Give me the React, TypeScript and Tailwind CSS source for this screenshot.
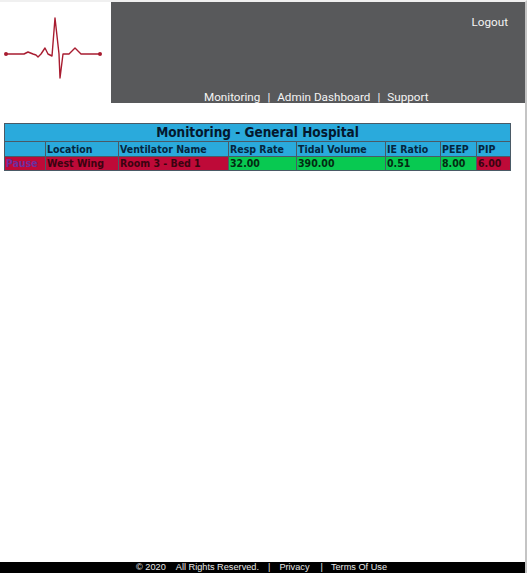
import React from 'react';

const columns = [
  { label: '', width: 'w-[41px]' },
  { label: 'Location', width: 'w-[73px]' },
  { label: 'Ventilator Name', width: 'w-[110px]' },
  { label: 'Resp Rate', width: 'w-[68px]' },
  { label: 'Tidal Volume', width: 'w-[89px]' },
  { label: 'IE Ratio', width: 'w-[55px]' },
  { label: 'PEEP', width: 'w-[36px]' },
  { label: 'PIP', width: 'w-[34px]' },
];

const cells = [
  { value: 'West Wing', alarm: true },
  { value: 'Room 3 - Bed 1', alarm: true },
  { value: '32.00', alarm: false },
  { value: '390.00', alarm: false },
  { value: '0.51', alarm: false },
  { value: '8.00', alarm: false },
  { value: '6.00', alarm: true },
];

const cellBase = 'border border-[#4a5a66] px-[1px] py-0 leading-[13px] text-left overflow-hidden whitespace-nowrap';

const App = () => {
  return (
    <div className="h-[573px] w-[527px] flex flex-col bg-white overflow-hidden border-r-2 border-r-[#c4c4c4] border-t-2 border-t-[#f0f0f0]">
      {/* Header */}
      <div className="flex h-[101px] shrink-0">
        <div className="w-[111px] shrink-0 pt-[14px]">
          <svg width="108" height="68" viewBox="0 0 108 68" fill="none" className="block">
            <path
              d="M6 38 H24 L28 36 L33 38 L36 39 L38 41 L41 38 L45 32 L48 38 L52 40 L55 2 L59 38 L60 62 L63 38 H69 L75 32 L81 38 H100"
              stroke="#a81c30"
              strokeWidth="1.4"
              strokeLinejoin="round"
            />
            <circle cx="6" cy="38" r="2" fill="#a81c30" />
            <circle cx="100" cy="38" r="2" fill="#a81c30" />
          </svg>
        </div>
        <div className="flex-1 flex flex-col justify-between bg-[#58595b] text-[#f4f4f4] font-['Roboto',sans-serif] text-[11.7px]">
          <div className="flex justify-end pt-[12px] pr-[17px]">
            <a className="leading-[16px]">Logout</a>
          </div>
          <nav className="flex gap-[7px] leading-[14px] h-[14px] pl-[93px] pt-[1px] whitespace-nowrap">
            <a>Monitoring</a>
            <span>|</span>
            <a>Admin Dashboard</a>
            <span>|</span>
            <a>Support</a>
          </nav>
        </div>
      </div>

      {/* Monitoring table */}
      <main className="flex-1 pt-[20px] pl-[4px] font-['DejaVu_Sans_Condensed','DejaVu_Sans',sans-serif] [font-stretch:condensed] font-bold text-[10.5px]">
        <table className="table-fixed border-collapse w-[507px] text-[#0a0f1c]">
          <colgroup>
            {columns.map((col) => (
              <col key={col.label} className={col.width} />
            ))}
          </colgroup>
          <thead>
            <tr className="bg-[#2aaadc] h-[18px]">
              <th colSpan={8} className="border border-[#4a5a66] text-center text-[13.5px] leading-[17px] text-[#04182e]">
                Monitoring - General Hospital
              </th>
            </tr>
            <tr className="bg-[#2aaadc] h-[15px] text-[#04263f]">
              {columns.map((col) => (
                <th key={col.label} className={cellBase}>
                  {col.label}
                </th>
              ))}
            </tr>
          </thead>
          <tbody>
            <tr className="h-[14px]">
              <td className={`${cellBase} bg-[#be0a38] text-[#6b2fa0]`}>Pause</td>
              {cells.map((cell) => (
                <td key={cell.value} className={`${cellBase} ${cell.alarm ? 'bg-[#be0a38] text-[#3a0410]' : 'bg-[#08c951] text-[#032b12]'}`}>
                  {cell.value}
                </td>
              ))}
            </tr>
          </tbody>
        </table>
      </main>

      {/* Footer */}
      <footer className="h-[11px] shrink-0 bg-black text-[#e8e8e8] font-['Liberation_Sans',sans-serif] text-[9.2px] leading-[11px] whitespace-nowrap pl-[136px] flex">
        <span>© 2020</span>
        <span className="ml-[10px]">All Rights Reserved.</span>
        <span className="ml-[9px]">|</span>
        <span className="ml-[9px]">Privacy</span>
        <span className="ml-[11px]">|</span>
        <span className="ml-[8px]">Terms Of Use</span>
      </footer>
    </div>
  );
};

export default App;
